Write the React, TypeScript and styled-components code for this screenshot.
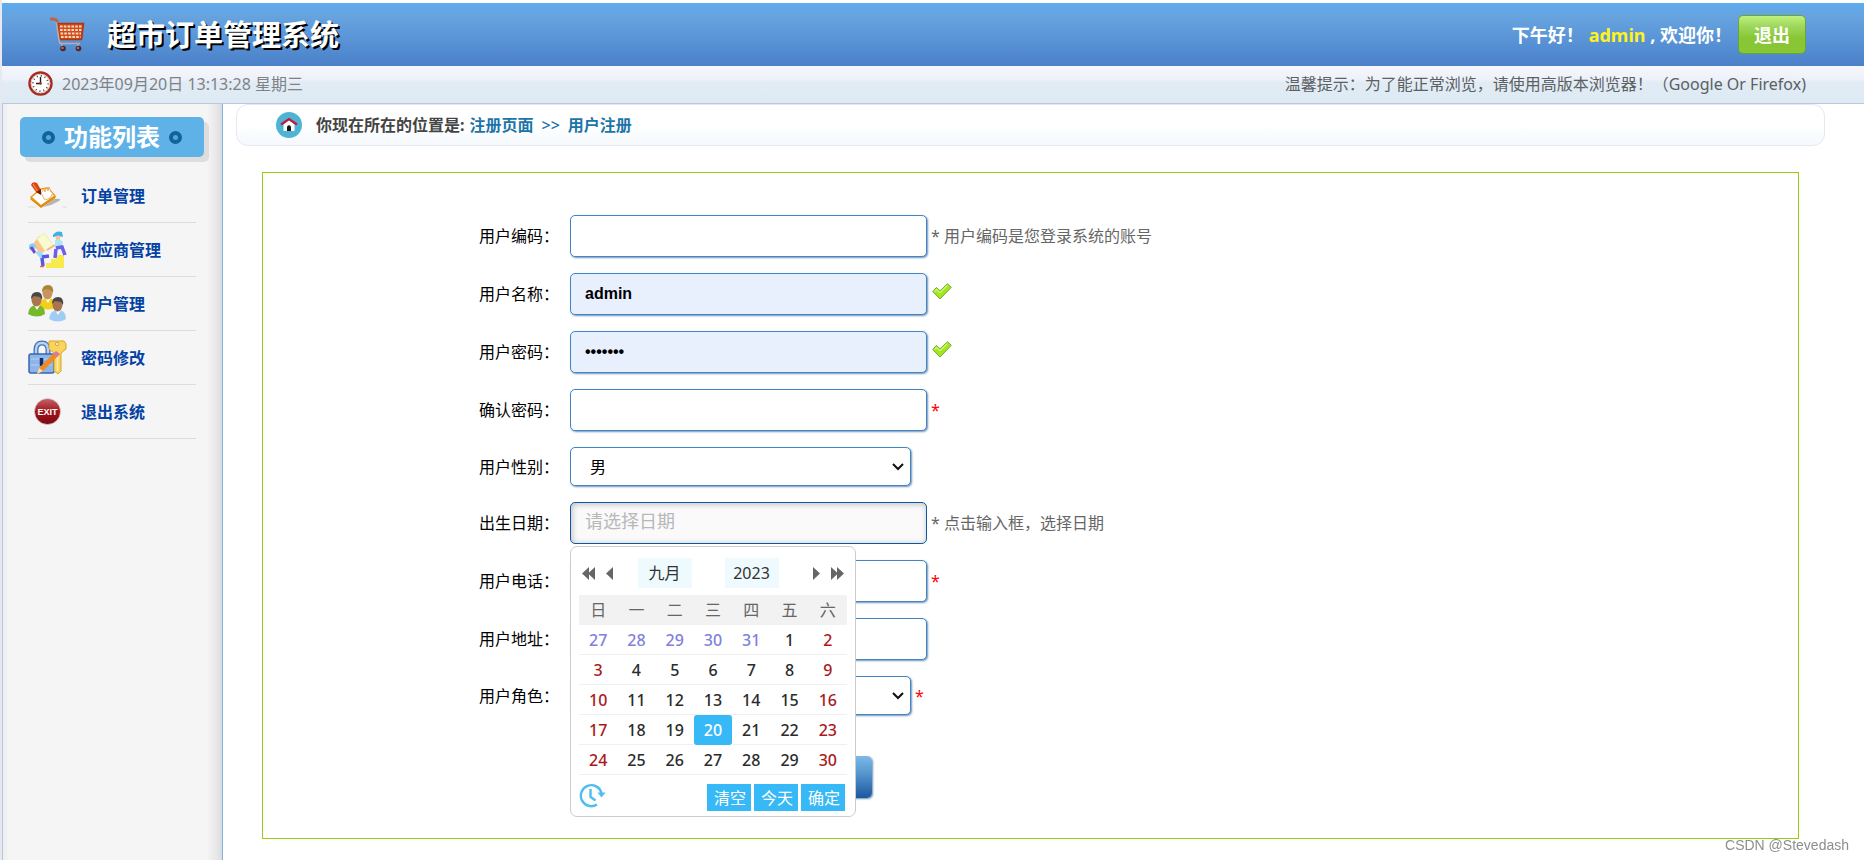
import React from 'react';
import styled, { createGlobalStyle, css } from 'styled-components';

const GlobalStyle = createGlobalStyle`
  *, *::before, *::after { box-sizing: border-box; }
  body {
    margin: 0;
    background: #fff;
    color: #000;
    font: 16px/24px "Noto Sans", "Noto Sans CJK SC", sans-serif;
  }
  button, input, select { font: inherit; }
  a { color: inherit; text-decoration: none; }
  ul { margin: 0; padding: 0; list-style: none; }
  h1, h2 { margin: 0; }
`;

const Page = styled.div`
  display: flex;
  flex-direction: column;
  min-height: 100vh;
  padding-top: 3px;
  border-left: 2px solid #e6e9f0;
`;

const Header = styled.header`
  display: flex;
  align-items: center;
  height: 63px;
  padding: 0 58px 0 48px;
  background: linear-gradient(#5eabee, #66a3de 22%, #5c98d9 50%, #4a80c8);
  color: #fff;
`;

const SiteTitle = styled.h1`
  margin-left: 22px;
  font-size: 29px;
  line-height: 40px;
  text-shadow: 2px 2px 0 #000;
`;

const Greeting = styled.p`
  margin: 0 6px 0 auto;
  font-size: 18px;
  font-weight: 700;
`;

const UserName = styled.span`
  margin-left: 5px;
  color: #fff21c;
`;

const LogoutButton = styled.button`
  height: 39px;
  padding: 0 15px;
  border: 1px solid #6ba33a;
  border-radius: 5px;
  background: linear-gradient(#bdf07c, #9cd65a 30%, #88c634 60%, #87c636);
  color: #fff;
  font-size: 18px;
  font-weight: 700;
`;

const InfoBar = styled.div`
  display: flex;
  align-items: center;
  justify-content: space-between;
  height: 38px;
  padding: 0 58px 2px 26px;
  border-bottom: 1px solid #b9c8dc;
  background: linear-gradient(#f5f7fb, #eef1fa 35%, #e1ebf4 45%, #deebf4);
  color: #5c5f63;
`;

const Clock = styled.time`
  display: flex;
  align-items: center;
  gap: 9px;
  color: #7e8287;
`;

const Body = styled.div`
  display: flex;
  flex: 1;
`;

const Sidebar = styled.aside`
  flex: 0 0 221px;
  padding: 13px 18px 0 17px;
  border-left: 1px solid #b9c7dc;
  border-right: 1px solid #86b1d8;
  background: linear-gradient(to right, #eeeeee, #f5f5f5 3%, #f5f5f5 93%, #e6e6e6 98%, #d6dce2);
`;

const SidebarTitle = styled.h2`
  display: flex;
  align-items: center;
  justify-content: center;
  gap: 9px;
  height: 40px;
  border-radius: 5px;
  background: #5fb2e8;
  box-shadow: 5px 5px 0 #ddd;
  color: #fff;
  font-size: 24px;
`;

const Dot = styled.span`
  width: 13px;
  height: 13px;
  border: 4px solid #0f639f;
  border-radius: 50%;
  background: #5fa6cf;
`;

const Menu = styled.ul`
  margin: 12px 8px 0;
`;

const MenuLink = styled.a`
  display: flex;
  align-items: center;
  gap: 14px;
  height: 54px;
  border-bottom: 1px solid #ddd;
  color: #0442a4;
  font-weight: 700;
`;

const Main = styled.main`
  flex: 1;
  padding: 0 39px 21px 13px;
`;

const Breadcrumb = styled.nav`
  display: flex;
  align-items: center;
  height: 42px;
  padding-left: 39px;
  border: 1px solid #e4e8f2;
  border-radius: 12px;
  background: linear-gradient(#fff 50%, #f4f9fc);
  font-weight: 700;
`;

const Location = styled.span`
  margin: 0 5px 0 14px;
  color: #444;
`;

const Trail = styled.a`
  color: #1c74a8;
`;

const Separator = styled.span`
  margin: 0 8px;
  color: #1c74a8;
  font-weight: 500;
`;

const Form = styled.form`
  display: flex;
  flex-direction: column;
  gap: 16px;
  margin: 26px 26px 0;
  padding: 42px 0 40px;
  border: 1px solid #9c1;
`;

const Row = styled.div`
  display: flex;
  align-items: center;
`;

const Label = styled.label`
  flex: 0 0 20%;
  padding-right: 11px;
  text-align: right;
`;

const Field = styled.div`
  position: relative;
`;

const fieldBox = css`
  display: block;
  border: 1px solid #4385c4;
  border-radius: 5px;
  box-shadow: 1px 1px 2px #6f94b8;
  outline: 0;
`;

const TextInput = styled.input<{ $filled?: boolean; $active?: boolean }>`
  ${fieldBox}
  width: 357px;
  height: 42px;
  padding: 0 14px;
  background: ${p => (p.$filled ? '#e8f0fe' : '#fff')};
  font: 700 16px "Liberation Sans", "Noto Sans CJK SC", sans-serif;
  ${p => p.$active && css`
    border-color: #0d57a6;
    background: #fafafa;
    box-shadow: inset 1px 1px 6px #bbb;
  `}
  &::placeholder {
    color: #b8b8b8;
    font: 400 18px "Noto Sans CJK SC", sans-serif;
  }
`;

const Select = styled.select`
  ${fieldBox}
  width: 341px;
  height: 39px;
  padding: 0 32px 0 19px;
  appearance: none;
  background: #fff;
  color: #000;
`;

const Chevron = styled.svg`
  position: absolute;
  top: 15px;
  right: 7px;
  pointer-events: none;
`;

const Hint = styled.span<{ $required?: boolean }>`
  display: flex;
  margin-left: 4px;
  color: ${p => (p.$required ? '#f00' : '#666')};
`;

const CheckMark = styled.svg`
  margin: 0 0 5px 1px;
`;

const Actions = styled.div`
  display: flex;
  padding: 25px 0 0 20%;
`;

const SubmitButton = styled.button`
  width: 130px;
  height: 42px;
  margin-left: 172px;
  border: 0;
  border-radius: 5px;
  background: linear-gradient(#7db9e8, #5c9cd2 35%, #1c57a0);
  box-shadow: 1px 1px 2px #6f94b8;
`;

const Calendar = styled.div`
  position: absolute;
  z-index: 2;
  top: calc(100% + 2px);
  left: 0;
  width: 286px;
  padding: 11px 8px 4px;
  border: 1px solid #ccc;
  border-radius: 7px;
  background: #fff;
`;

const CalendarHead = styled.div`
  display: flex;
  align-items: center;
  justify-content: space-between;
  margin-bottom: 7px;
  padding: 0 3px;
`;

const ArrowGroup = styled.div`
  display: flex;
  gap: 11px;
`;

const ArrowButton = styled.button`
  display: flex;
  padding: 0;
  border: 0;
  background: none;
`;

const Period = styled.button`
  width: 54px;
  height: 30px;
  padding: 0;
  border: 0;
  background: #effaff;
  color: #333;
`;

const Periods = styled.div`
  display: flex;
  gap: 33px;
  margin-right: 10px;
`;

const Days = styled.table`
  width: 100%;
  table-layout: fixed;
  border-collapse: separate;
  border-spacing: 0;
  text-align: center;
`;

const WeekDay = styled.th`
  height: 30px;
  padding: 0;
  background: #f2f2f2;
  color: #666;
  font-weight: 400;
`;

type DayKind = 'plain' | 'weekend' | 'outside' | 'selected';

const dayColors: Record<DayKind, string> = {
  plain: '#2b2b2b',
  weekend: '#ab1a1a',
  outside: '#8080dd',
  selected: '#fff',
};

const Day = styled.td<{ $kind: DayKind }>`
  height: 30px;
  padding: 0;
  border-bottom: 1px solid #f0f0f0;
  color: ${p => dayColors[p.$kind]};
  font-weight: 500;
  ${p => p.$kind === 'selected' && css`
    border-radius: 3px;
    border-color: #36b9f6;
    background: #36b9f6;
  `}
`;

const CalendarFoot = styled.div`
  display: flex;
  align-items: center;
  gap: 3px;
  margin-top: 8px;
  padding-right: 2px;
`;

const TimeButton = styled(ArrowButton)`
  margin-right: auto;
  padding-bottom: 4px;
`;

const FootButton = styled.button`
  width: 44px;
  height: 27px;
  padding: 0 0 0 2px;
  border: 0;
  background: #36b9f6;
  color: #fff;
  line-height: 26px;
`;

const Watermark = styled.div`
  position: fixed;
  right: 15px;
  bottom: 5px;
  color: #8e8e8e;
  font: 14px/20px "Liberation Sans", sans-serif;
`;

const CartIcon = () => (
  <svg width="35" height="35" viewBox="0 0 35 35" fill="none" aria-hidden="true">
    <path d="M7.500 6.500h26l-2 16h-22z" fill="#cf4a22" />
    <path d="M10 9.500h22M10 13h21.500M10.500 16.500H31M11 20h19.500" stroke="#fbd9ae" strokeWidth="1.800" strokeDasharray="2.600 1.200" />
    <path d="M7.500 6.500h26l-2 16h-22z" stroke="#b5350f" strokeWidth="1.600" />
    <path d="M6 3l3 20 1 3.500h20M12 27v3M28 27v3" stroke="#b3aeb6" strokeWidth="1.600" />
    <path d="M1.500 2q4-.5 5.500 2" stroke="#bd6440" strokeWidth="3" strokeLinecap="round" />
    <circle cx="13" cy="31.500" r="2.800" fill="#43282c" /><circle cx="12.500" cy="31" r="1.300" fill="#c4615a" />
    <circle cx="28.500" cy="31.500" r="2.800" fill="#43282c" /><circle cx="28" cy="31" r="1.300" fill="#c4615a" />
  </svg>
);

const ClockIcon = () => (
  <svg width="25" height="25" viewBox="0 0 25 25" aria-hidden="true">
    <circle cx="12.5" cy="12.5" r="11" fill="#fff" stroke="#a62b22" strokeWidth="2.400" />
    <circle cx="12.5" cy="12.5" r="9.300" fill="none" stroke="#d8b5b0" strokeWidth=".8" />
    <circle cx="12.5" cy="12.5" r="7.600" fill="none" stroke="#444" strokeWidth="1.800" strokeDasharray="1 2.980" />
    <path d="M12.500 6v6.500H8" fill="none" stroke="#222" strokeWidth="1.400" />
    <circle cx="12.5" cy="12.5" r="1.300" fill="#a62b22" />
  </svg>
);

const HomeIcon = () => (
  <svg width="26" height="26" viewBox="0 0 26 26" aria-hidden="true">
    <circle cx="13" cy="13" r="13" fill="#4fb4d4" />
    <path d="M7.500 12.500 13 8l5.500 4.500V19h-11z" fill="#fff" />
    <path d="M5 12.500 13 7l8 5.500" fill="none" stroke="#c4183c" strokeWidth="2.200" />
    <path d="M11 19v-4.500q2-2.500 4 0V19z" fill="#161616" />
  </svg>
);

const OrderIcon = () => (
  <svg width="39" height="39" viewBox="0 0 39 39" aria-hidden="true">
    <path d="M15 31l11-8q9-1 5 2l-8 4z" fill="#b4b4b4" />
    <path d="M3 21 13 13l7-1 7 8-14 10z" fill="#fff" stroke="#ee9c12" strokeWidth="1.600" strokeLinejoin="round" />
    <path d="M2.500 21.500 13 29.500l14.500-9.500v2L13 32 2.500 23.500z" fill="#e08a10" />
    <path d="m13 17 3-4 1 3 1-5 2 4 1-4 2 5 2 1-3 5-5 2z" fill="#fff" stroke="#e2a65c" strokeWidth=".9" />
    <path d="M3 9q1-4 6-2l4 7-1 4-4-2z" fill="#df4314" />
    <path d="m5 8 5 8" stroke="#f48a4a" strokeWidth="1.200" />
    <path d="m8 16 5-3v6z" fill="#6b2410" />
    <path d="M0 31h8M34 31h5" stroke="#ddd" />
  </svg>
);

const SupplierIcon = () => (
  <svg width="39" height="39" viewBox="0 0 39 39" aria-hidden="true">
    <path d="M18 33h5v-4h6v-4h7v13H18z" fill="#f8ea4c" />
    <path d="m5 14 6-8 10 11-5 5-5 1z" fill="#fbc48c" />
    <path d="m9 9 7-6 9 12-8 6z" fill="#fafad0" stroke="#efe6a4" strokeWidth=".8" />
    <path d="M25 5q3-5 9-3l1 5-4-1-6 1z" fill="#3fb2e4" />
    <circle cx="30" cy="8" r="2.400" fill="#f4c4a0" />
    <path d="M27 10q6-2 8 3l-3 5h-5z" fill="#a9e6f7" />
    <path d="m28 18 6-1 3 8M28 19l-1 9" fill="none" stroke="#6a60ea" strokeWidth="3.500" />
    <path d="m19 20 8-5" stroke="#f6b08c" strokeWidth="1.800" />
    <path d="M1 15q4-4 7 1l-2 6-5-3z" fill="#7fd4f4" /><path d="m3 17 4 6" stroke="#7545d4" strokeWidth="3" />
    <path d="m7 22 6-1 4 6-4 2z" fill="#9bdcf6" />
    <path d="m14 27 7-1M14 28l1 8" stroke="#5a58e0" strokeWidth="3.500" />
    <path d="M12 36.500h4" stroke="#e8604c" strokeWidth="1.500" />
  </svg>
);

const Person = ({ x, y, body, skin, hair }: { x: number; y: number; body: string; skin: string; hair: string }) => (
  <g transform={`translate(${x} ${y})`}>
    <path d="M0 22q1-9 9-9t8 9q-8 5-17 0z" fill={body} />
    <path d="m6 13 3 5 3-5z" fill="#fff" />
    <ellipse cx="8.500" cy="8" rx="5" ry="6.500" fill={skin} />
    <path d="M3 7q0-7 6-7t5 8l-2-3-6-1z" fill={hair} />
  </g>
);

const UsersIcon = () => (
  <svg width="39" height="39" viewBox="0 0 39 39" aria-hidden="true">
    <Person x={11} y={1} body="#f3cf1c" skin="#c9935e" hair="#a98436" />
    <Person x={0} y={8} body="#76b82a" skin="#a9744e" hair="#474747" />
    <Person x={21} y={13} body="#9fcdf5" skin="#a9744e" hair="#474747" />
  </svg>
);

const PasswordIcon = () => (
  <svg width="39" height="39" viewBox="0 0 39 39" aria-hidden="true">
    <path d="M8 17v-5q0-7 6-7t6 7v5" fill="none" stroke="#4472b8" strokeWidth="5" />
    <path d="M8 17v-5q0-7 6-7t6 7v5" fill="none" stroke="#b9d1f2" strokeWidth="2.400" />
    <rect x="1" y="16" width="25" height="19" rx="2" fill="#8db5ea" stroke="#3565b2" strokeWidth="1.500" />
    <path d="M3 21h21M3 27h21" stroke="#b4d0f5" />
    <path d="M13.500 20v8" stroke="#152f63" strokeWidth="3.500" />
    <path d="M21 3h15l2 3v5l-5 4v18l-3 3-4-3V15l-5-4V5z" fill="#f8d45c" stroke="#d9a52a" />
    <path d="M29.500 16v17" stroke="#fdf0b4" strokeWidth="1.500" />
    <circle cx="29" cy="6" r="1.600" fill="#fff3c4" stroke="#c58b17" strokeWidth=".7" />
    <path d="m9 36 2-6L26 15l4 3-15 15z" fill="#f08b22" />
    <path d="m9 36 2-6 4 3z" fill="#f8deb4" /><path d="m25 16 3-3 4 3-3 3z" fill="#d877a7" />
  </svg>
);

const ExitIcon = () => (
  <svg width="39" height="39" viewBox="0 0 39 39" aria-hidden="true">
    <defs>
      <linearGradient id="exit-red" x2="0" y2="1"><stop stopColor="#c4666a" /><stop offset=".5" stopColor="#a3141c" /><stop offset="1" stopColor="#7c0a10" /></linearGradient>
    </defs>
    <circle cx="19.500" cy="19.500" r="13" fill="url(#exit-red)" stroke="#ddd" strokeWidth=".7" />
    <text x="19.500" y="23" textAnchor="middle" fill="#fff" fontSize="9" fontWeight="700" fontFamily="Liberation Sans">EXIT</text>
  </svg>
);

const Check = () => (
  <CheckMark width="20" height="17" viewBox="0 0 20 17" aria-hidden="true">
    <path d="m.7 8.500 3.600-4 3.700 3.300L15.500.8l3.800 3.500L8 16z" fill="#a3e61c" stroke="#71ad35" strokeLinejoin="round" />
    <path d="m2.500 8.500 2-2L8 9.600 15.500 2.500" fill="none" stroke="#d2f77a" strokeWidth="1.200" />
  </CheckMark>
);

const Arrow = ({ back, twice, label }: { back?: boolean; twice?: boolean; label: string }) => {
  const width = twice ? 13 : 7;
  return (
    <ArrowButton type="button" aria-label={label}>
      <svg width={width} height="13" viewBox={`0 0 ${width} 13`} fill="#666">
        <g transform={back ? `translate(${width} 0) scale(-1 1)` : undefined}>
          <path d="M0 0l7 6.500L0 13z" />
          {twice && <path d="M6 0l7 6.500L6 13z" />}
        </g>
      </svg>
    </ArrowButton>
  );
};

const TimeIcon = () => (
  <svg width="27" height="25" viewBox="0 0 27 25" fill="none" stroke="#4fbdf2" strokeWidth="2.400" aria-hidden="true">
    <path d="M18 21.500A10.500 10.500 0 1 1 22.500 10" />
    <path d="M11.500 6v8l5 3.500" />
    <path d="M18.500 9.500h8l-4 5z" fill="#4fbdf2" stroke="none" />
  </svg>
);

const menuItems = [
  { text: '订单管理', Icon: OrderIcon },
  { text: '供应商管理', Icon: SupplierIcon },
  { text: '用户管理', Icon: UsersIcon },
  { text: '密码修改', Icon: PasswordIcon },
  { text: '退出系统', Icon: ExitIcon },
];

const weekDays = ['日', '一', '二', '三', '四', '五', '六'];
const weeks = [
  [27, 28, 29, 30, 31, 1, 2],
  [3, 4, 5, 6, 7, 8, 9],
  [10, 11, 12, 13, 14, 15, 16],
  [17, 18, 19, 20, 21, 22, 23],
  [24, 25, 26, 27, 28, 29, 30],
];

const dayKind = (week: number, column: number, day: number): DayKind => {
  if (week === 0 && day > 7) return 'outside';
  if (day === 20) return 'selected';
  return column === 0 || column === 6 ? 'weekend' : 'plain';
};

const DatePicker = () => (
  <Calendar>
    <CalendarHead>
      <ArrowGroup>
        <Arrow back twice label="上一年" />
        <Arrow back label="上一月" />
      </ArrowGroup>
      <Periods>
        <Period type="button">九月</Period>
        <Period type="button">2023</Period>
      </Periods>
      <ArrowGroup>
        <Arrow label="下一月" />
        <Arrow twice label="下一年" />
      </ArrowGroup>
    </CalendarHead>
    <Days>
      <thead>
        <tr>{weekDays.map(d => <WeekDay key={d} scope="col">{d}</WeekDay>)}</tr>
      </thead>
      <tbody>
        {weeks.map((week, w) => (
          <tr key={w}>
            {week.map((day, c) => <Day key={c} $kind={dayKind(w, c, day)}>{day}</Day>)}
          </tr>
        ))}
      </tbody>
    </Days>
    <CalendarFoot>
      <TimeButton type="button" aria-label="选择时间"><TimeIcon /></TimeButton>
      <FootButton type="button">清空</FootButton>
      <FootButton type="button">今天</FootButton>
      <FootButton type="button">确定</FootButton>
    </CalendarFoot>
  </Calendar>
);

const FormRow = ({ id, label, hint, children }: {
  id: string; label: string; hint?: React.ReactNode; children: React.ReactNode;
}) => (
  <Row>
    <Label htmlFor={id}>{label}</Label>
    <Field>{children}</Field>
    {hint}
  </Row>
);

const Dropdown = ({ id, options }: { id: string; options: string[] }) => (
  <>
    <Select id={id}>{options.map(o => <option key={o}>{o}</option>)}</Select>
    <Chevron width="12" height="9" viewBox="0 0 12 9" fill="none" stroke="#111" strokeWidth="2" aria-hidden="true">
      <path d="m1 2 5 5 5-5" />
    </Chevron>
  </>
);

const required = <Hint $required>*</Hint>;
const accepted = <Hint><Check /></Hint>;

export default function App() {
  return (
    <Page>
      <GlobalStyle />
      <Header>
        <CartIcon />
        <SiteTitle>超市订单管理系统</SiteTitle>
        <Greeting>下午好！<UserName>admin</UserName> , 欢迎你！</Greeting>
        <LogoutButton type="button">退出</LogoutButton>
      </Header>
      <InfoBar>
        <Clock><ClockIcon />2023年09月20日 13:13:28 星期三</Clock>
        <span>温馨提示：为了能正常浏览，请使用高版本浏览器！（Google Or Firefox)</span>
      </InfoBar>
      <Body>
        <Sidebar>
          <SidebarTitle><Dot />功能列表<Dot /></SidebarTitle>
          <Menu>
            {menuItems.map(({ text, Icon }) => (
              <li key={text}><MenuLink href="#"><Icon />{text}</MenuLink></li>
            ))}
          </Menu>
        </Sidebar>
        <Main>
          <Breadcrumb>
            <HomeIcon />
            <Location>你现在所在的位置是:</Location>
            <Trail href="#">注册页面</Trail>
            <Separator>&gt;&gt;</Separator>
            <Trail href="#">用户注册</Trail>
          </Breadcrumb>
          <Form onSubmit={e => e.preventDefault()}>
            <FormRow id="code" label="用户编码：" hint={<Hint>* 用户编码是您登录系统的账号</Hint>}>
              <TextInput id="code" type="text" />
            </FormRow>
            <FormRow id="name" label="用户名称：" hint={accepted}>
              <TextInput id="name" type="text" defaultValue="admin" $filled />
            </FormRow>
            <FormRow id="password" label="用户密码：" hint={accepted}>
              <TextInput id="password" type="password" defaultValue="1234567" $filled />
            </FormRow>
            <FormRow id="confirm" label="确认密码：" hint={required}>
              <TextInput id="confirm" type="password" />
            </FormRow>
            <FormRow id="gender" label="用户性别：">
              <Dropdown id="gender" options={['男']} />
            </FormRow>
            <FormRow id="birthday" label="出生日期：" hint={<Hint>* 点击输入框，选择日期</Hint>}>
              <TextInput id="birthday" type="text" placeholder="请选择日期" $active />
              <DatePicker />
            </FormRow>
            <FormRow id="phone" label="用户电话：" hint={required}>
              <TextInput id="phone" type="text" />
            </FormRow>
            <FormRow id="address" label="用户地址：">
              <TextInput id="address" type="text" />
            </FormRow>
            <FormRow id="role" label="用户角色：" hint={required}>
              <Dropdown id="role" options={['']} />
            </FormRow>
            <Actions>
              <SubmitButton type="submit" aria-label="保存" />
            </Actions>
          </Form>
        </Main>
      </Body>
      <Watermark>CSDN @Stevedash</Watermark>
    </Page>
  );
}
